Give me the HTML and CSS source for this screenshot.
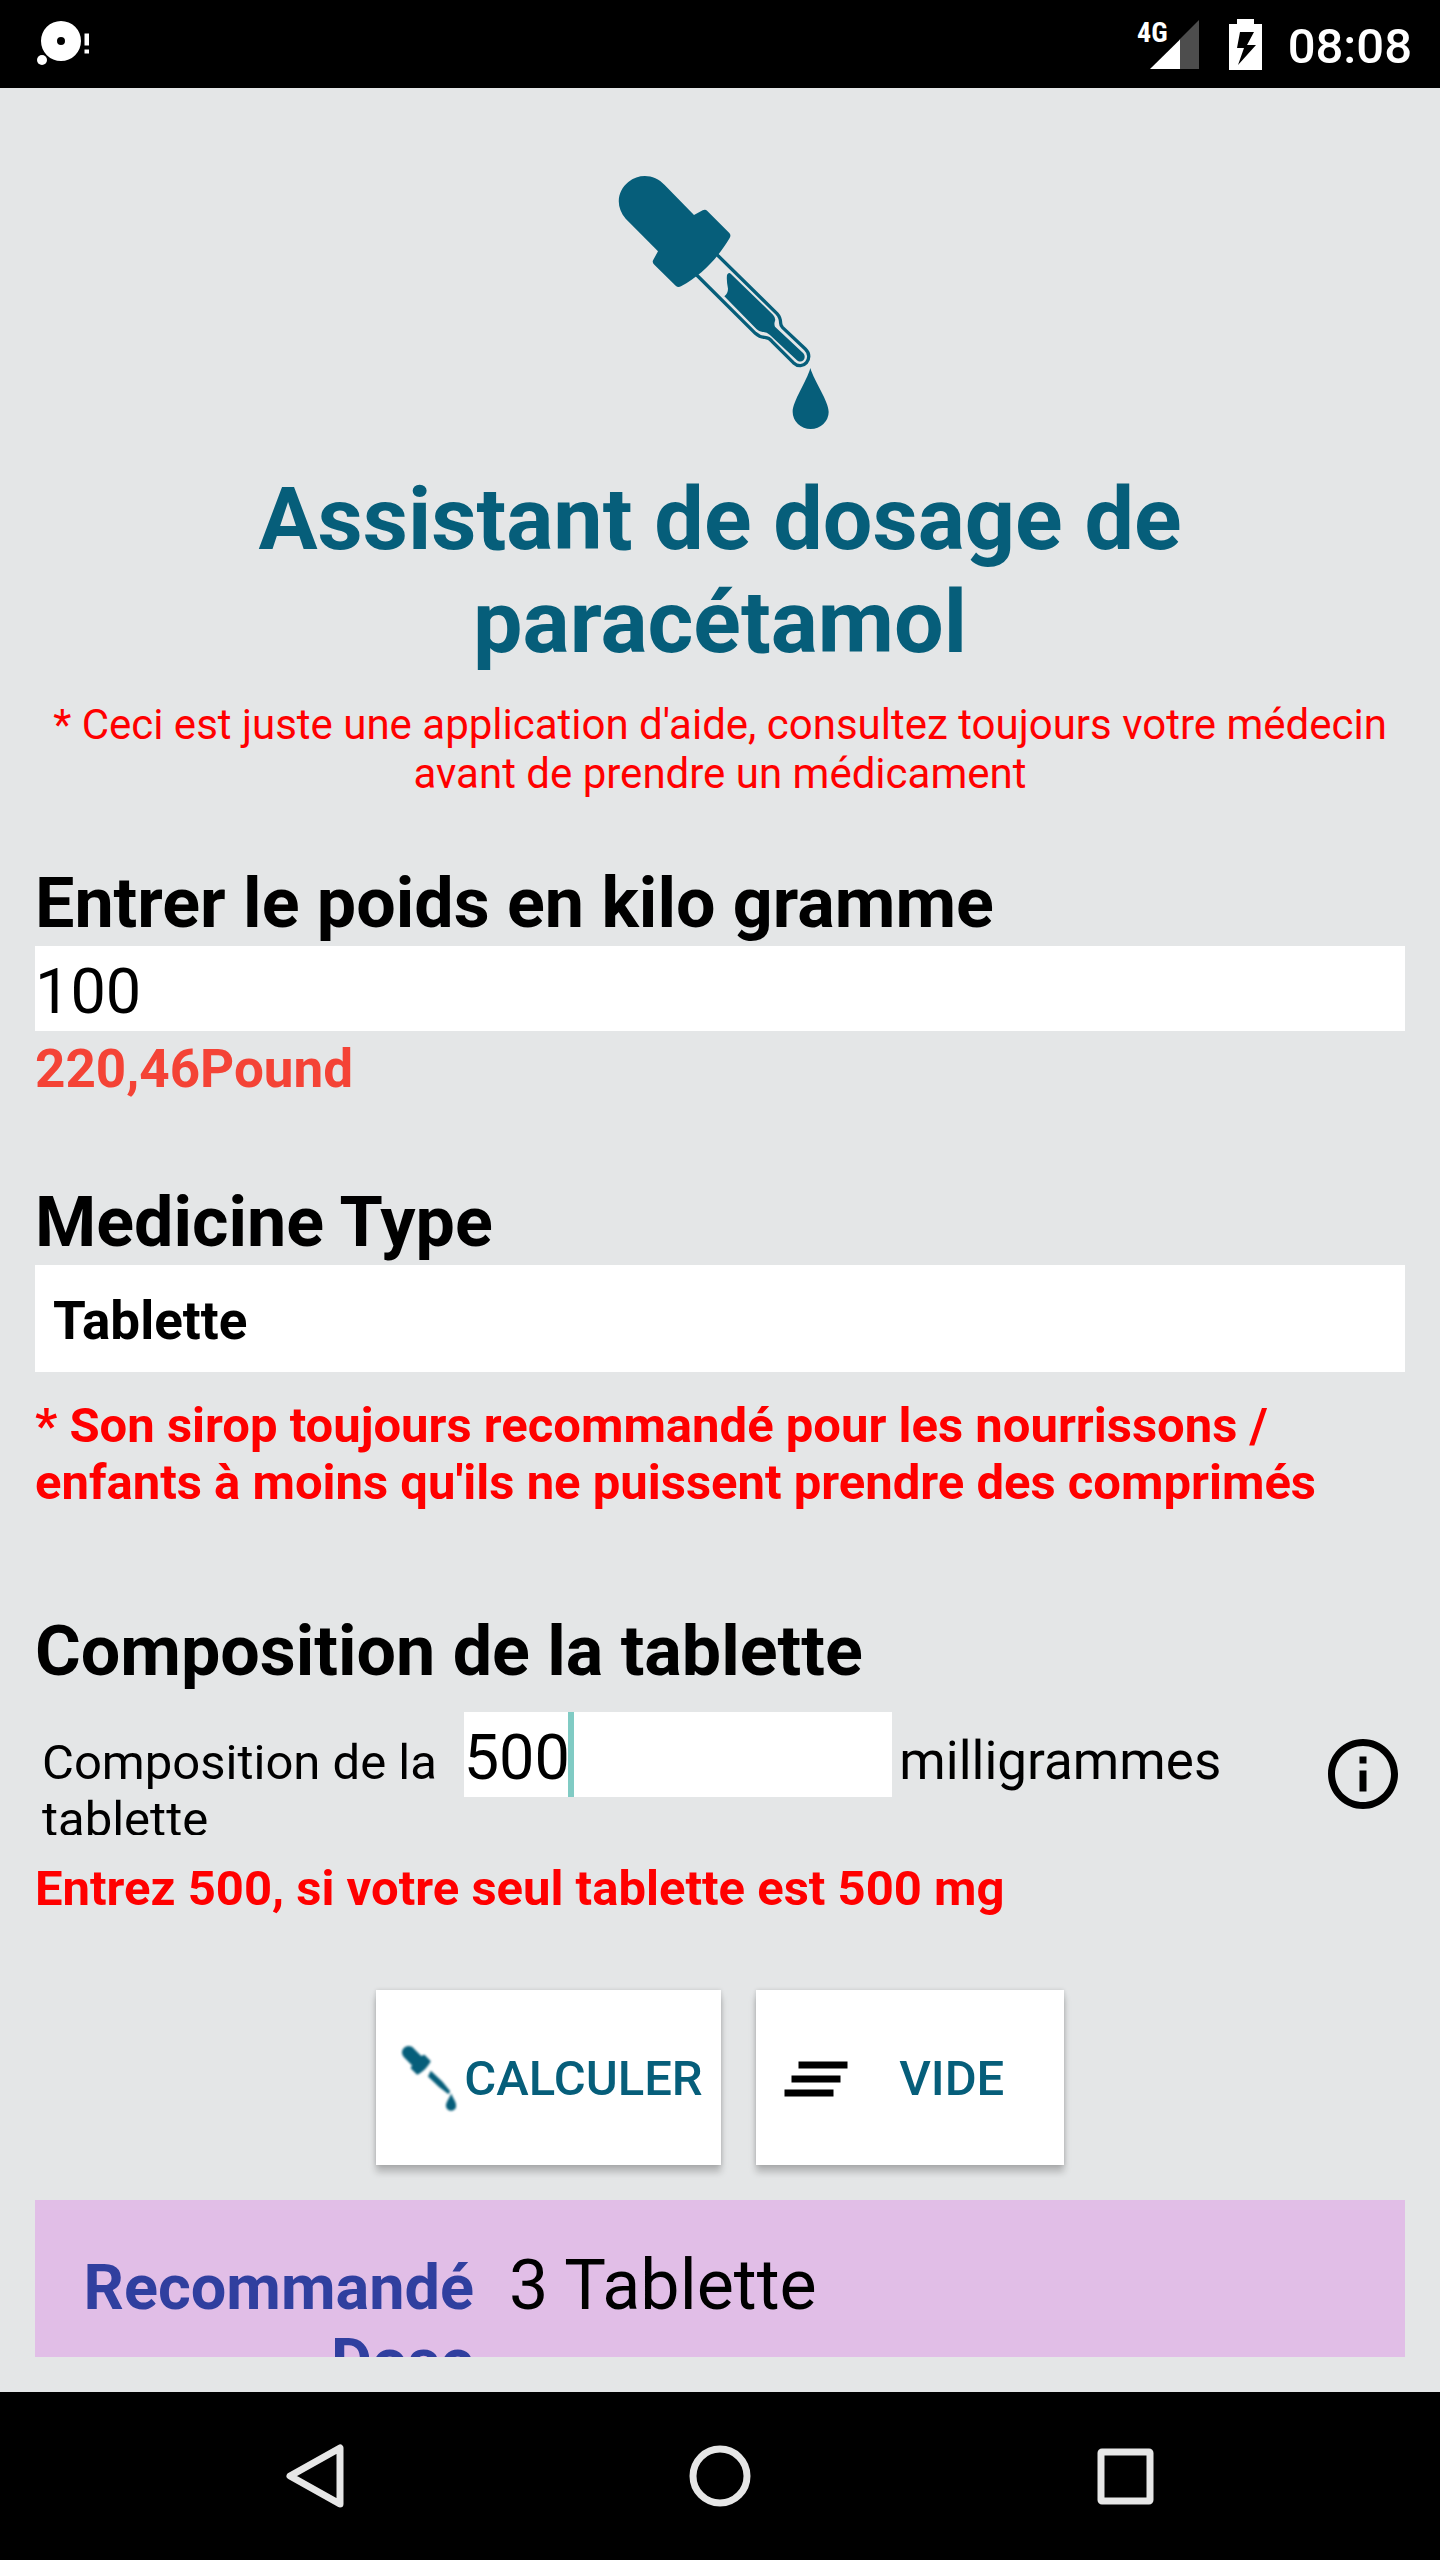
FILE: index.html
```html
<!DOCTYPE html>
<html lang="fr">
<head>
    <meta charset="UTF-8">
    <meta name="viewport" content="width=device-width, initial-scale=1.0">
    <title>Assistant de dosage de paracétamol</title>
    <link rel="stylesheet" href="styles.css">
</head>
<body>
    <header class="status-bar">
        <svg class="status-disc" viewBox="0 0 54 48" aria-hidden="true">
            <path fill-rule="evenodd" d="M24 0a20 20 0 1 1 0 40a20 20 0 1 1 0-40zM24 16a4 4 0 1 0 0 8a4 4 0 1 0 0-8z"/>
            <circle cx="5" cy="39" r="5"/>
            <path d="M47.500 12.500h4.500v12h-4.500zM47.500 28.500h4.500v4h-4.500z"/>
        </svg>
        <div class="status-right">
            <svg class="status-signal" viewBox="0 0 62 52" aria-hidden="true">
                <text x="0" y="23" class="network">4G</text>
                <path class="dim" d="M62 1v49H42V21z"/>
                <path d="M13 50L43 20.500V50z"/>
            </svg>
            <svg class="status-battery" viewBox="0 0 33 52" aria-hidden="true">
                <path fill-rule="evenodd" d="M8 0h17v5h8v46H0V5h8zM11 13L8 29h7L9 46L27 26h-9L25 13z"/>
            </svg>
            <span class="time">08:08</span>
        </div>
    </header>

    <main class="container">
        <!-- Logo -->
        <svg class="logo" viewBox="-15 0 750 840" aria-hidden="true">
            <path d="M77 176C45 138 52 93 85 66C119 39 164 43 194 75L282 165L308 151Q316 146 322 153L388 219Q394 225 389 234C352 296 304 346 243 379Q234 384 227 377L163 314Q155 307 160 299L174 274Z"/>
            <path class="tube" d="M350 283L531 461Q542 473 542 490Q542 497 548 503L616 567C644 594 609 635 580 608L516 544Q508 533 494 532Q479 532 466 520L290 345"/>
            <path d="M381 345Q386 335 393 342L519 464Q529 475 524 486Q522 493 525 500L610 580C622 595 605 613 590 600L509 524Q500 515 488 516Q478 516 470 508L373 409Q384 400 384 386Q379 362 381 345Z"/>
            <path d="M631 624C643 665 686 723 686 756A54 51 0 0 1 578 756C578 723 620 665 631 624Z"/>
        </svg>

        <h1>Assistant de dosage de paracétamol</h1>
        <p class="warning">* Ceci est juste une application d'aide, consultez toujours votre médecin avant de prendre un médicament</p>

        <form id="dosage-form">
            <section>
                <h2><label for="weight">Entrer le poids en kilo gramme</label></h2>
                <input type="text" inputmode="decimal" id="weight" value="100">
                <p class="pound">220,46Pound</p>
            </section>

            <section>
                <h2><label for="type">Medicine Type</label></h2>
                <select id="type">
                    <option>Tablette</option>
                    <option>Sirop</option>
                </select>
                <p class="note">* Son sirop toujours recommandé pour les nourrissons / enfants à moins qu'ils ne puissent prendre des comprimés</p>
            </section>

            <section>
                <h2>Composition de la tablette</h2>
                <div class="composition">
                    <label for="dose">Composition de la tablette</label>
                    <div class="dose-field">
                        <input type="text" inputmode="decimal" id="dose" value="500">
                        <span class="cursor"></span>
                    </div>
                    <span class="unit">milligrammes</span>
                    <button type="button" class="info" aria-label="Info">
                        <svg viewBox="0 0 24 24" aria-hidden="true">
                            <path d="M11 17h2v-6h-2v6zm1-15C6.480 2 2 6.480 2 12s4.480 10 10 10 10-4.480 10-10S17.520 2 12 2zm0 18c-4.410 0-8-3.590-8-8s3.590-8 8-8 8 3.590 8 8-3.590 8-8 8zM11 9h2V7h-2v2z"/>
                        </svg>
                    </button>
                </div>
                <p class="note">Entrez 500, si votre seul tablette est 500 mg</p>
            </section>

            <div class="buttons">
                <button type="submit" class="btn">
                    <svg class="icon-dropper" viewBox="57 47 630 760" aria-hidden="true">
                        <path d="M77 176C45 138 52 93 85 66C119 39 164 43 194 75L282 165L308 151Q316 146 322 153L388 219Q394 225 389 234C352 296 304 346 243 379Q234 384 227 377L163 314Q155 307 160 299L174 274Z"/>
                        <path d="M393 335L530 464L620 575L600 610L490 525L360 405Z"/>
                        <path d="M631 600C643 645 690 700 690 745A60 60 0 0 1 570 745C570 700 620 645 631 600Z"/>
                    </svg>
                    <span>CALCULER</span>
                </button>
                <button type="reset" class="btn btn-clear">
                    <svg class="icon-clear" viewBox="0 0 24 24" aria-hidden="true">
                        <path d="M5 13h14v-2H5v2zm-2 4h14v-2H3v2zM7 7v2h14V7H7z"/>
                    </svg>
                    <span>VIDE</span>
                </button>
            </div>
        </form>

        <div class="result">
            <span class="result-label">Recommandé Dose</span>
            <output class="result-value" for="weight type dose">3 Tablette</output>
        </div>
    </main>

    <nav class="nav-bar">
        <button type="button" aria-label="Retour">
            <svg viewBox="0 0 70 70"><path d="M60 7V63L10 35Z"/></svg>
        </button>
        <button type="button" aria-label="Accueil">
            <svg viewBox="0 0 70 70"><circle cx="35" cy="35" r="27"/></svg>
        </button>
        <button type="button" aria-label="Applications récentes">
            <svg viewBox="0 0 70 70"><rect x="11" y="11" width="49" height="49" rx="1"/></svg>
        </button>
    </nav>

    <script>
        document.getElementById('dosage-form').addEventListener('submit', function(event) {
            event.preventDefault();
        });
    </script>
</body>
</html>
```

FILE: styles.css
```css
* {
    box-sizing: border-box;
}
body {
    display: flex;
    flex-direction: column;
    height: 100vh;
    margin: 0;
    font-family: Roboto, "Liberation Sans", sans-serif;
    background-color: #e4e6e7;
    color: #000;
}
h1, h2, p {
    margin: 0;
}
button, input, select {
    font-family: inherit;
    color: inherit;
    border: none;
    border-radius: 0;
    margin: 0;
    outline: none;
}
button {
    padding: 0;
    background: none;
    cursor: pointer;
}
svg {
    display: block;
    flex-shrink: 0;
}

/* Status bar */
.status-bar {
    display: flex;
    align-items: center;
    justify-content: space-between;
    height: 88px;
    flex-shrink: 0;
    padding: 2px 28px 0 37px;
    background-color: #000;
    color: #fff;
}
.status-bar svg {
    fill: #fff;
}
.status-disc {
    width: 54px;
    height: 48px;
}
.status-right {
    display: flex;
    align-items: center;
}
.status-signal {
    width: 62px;
    height: 52px;
    margin-right: 30px;
}
.status-signal .dim {
    fill: #4d4d4d;
}
.network {
    font-family: "Roboto Condensed", "Liberation Sans Narrow", Roboto, sans-serif;
    font-size: 28px;
    font-weight: bold;
}
.status-battery {
    width: 33px;
    height: 52px;
    margin-right: 26px;
}
.time {
    padding-top: 2px;
    font-size: 49px;
    font-weight: 500;
    line-height: 57px;
}

/* Content */
.container {
    display: flex;
    flex-direction: column;
    flex: 1;
    min-height: 0;
    padding: 72px 35px 35px;
}
.logo {
    align-self: center;
    width: 250px;
    height: 280px;
    fill: #065e7a;
}
.logo .tube {
    fill: none;
    stroke: #065e7a;
    stroke-width: 10;
}
h1 {
    margin-top: 27px;
    color: #065e7a;
    font-size: 88px;
    line-height: 103px;
    text-align: center;
}
.warning {
    margin-top: 27px;
    color: #f00;
    font-size: 42px;
    line-height: 49px;
    text-align: center;
}
section {
    margin-top: 81px;
}
section:first-child {
    margin-top: 64px;
}
section:nth-child(3) {
    margin-top: 99px;
}
h2 {
    font-size: 70px;
    line-height: 82px;
}
input {
    display: block;
    width: 100%;
    height: 85px;
    padding: 6px 0 0;
    background-color: #fff;
    font-size: 63px;
}
#weight, #type {
    margin-top: 2px;
}
.pound {
    margin-top: 7px;
    color: #f44336;
    font-size: 53px;
    font-weight: bold;
    line-height: 62px;
}
select {
    display: block;
    width: 100%;
    height: 107px;
    padding: 4px 18px 0;
    appearance: none;
    background-color: #fff;
    font-size: 53px;
    font-weight: bold;
}
.note {
    margin-top: 25px;
    color: #f00;
    font-size: 49px;
    font-weight: bold;
    line-height: 57px;
}

/* Composition row */
.composition {
    display: grid;
    grid-template-columns: repeat(3, minmax(0, 1fr)) 84px;
    align-items: start;
    height: 123px;
    margin-top: 20px;
    overflow: hidden;
}
.composition label {
    padding: 22px 7px 0;
    font-size: 49px;
    line-height: 57px;
}
.unit {
    padding: 18px 7px 0;
    font-size: 53px;
    line-height: 62px;
}
.dose-field {
    position: relative;
}
.cursor {
    position: absolute;
    top: 0;
    left: 104px;
    width: 6px;
    height: 100%;
    background-color: #80cbc4;
}
.info svg {
    width: 84px;
    height: 84px;
    margin-top: 20px;
}

/* Buttons */
.buttons {
    display: flex;
    justify-content: center;
    gap: 35px;
    margin-top: 73px;
}
.btn {
    display: flex;
    align-items: center;
    height: 175px;
    padding: 2px 18px 0;
    background-color: #fff;
    box-shadow: 0 7px 7px rgba(0, 0, 0, 0.22), 0 0 4px rgba(0, 0, 0, 0.14);
    color: #065e7a;
    font-size: 49px;
    font-weight: 500;
}
.btn span {
    flex: 1;
    text-align: center;
}
.btn-clear {
    width: 308px;
}
.icon-dropper {
    width: 54px;
    height: 65px;
    margin: 0 8px;
    fill: #065e7a;
    filter: blur(1px);
}
.icon-clear {
    width: 84px;
    height: 84px;
    fill: #000;
}

/* Result */
.result {
    display: grid;
    grid-template-columns: 404px 1fr;
    align-items: baseline;
    gap: 35px;
    flex: 1;
    min-height: 0;
    margin-top: 35px;
    padding: 44px 35px 0;
    overflow: hidden;
    background-color: #e1bee7;
}
.result-label {
    color: #303f9f;
    font-size: 63px;
    font-weight: bold;
    line-height: 74px;
    text-align: right;
}
.result-value {
    font-size: 70px;
    line-height: 82px;
}

/* Navigation bar */
.nav-bar {
    display: flex;
    align-items: center;
    justify-content: center;
    gap: 335px;
    height: 168px;
    flex-shrink: 0;
    background-color: #000;
}
.nav-bar svg {
    width: 70px;
    height: 70px;
    fill: none;
    stroke: #e6e6e6;
    stroke-width: 7;
    stroke-linejoin: round;
}
```
